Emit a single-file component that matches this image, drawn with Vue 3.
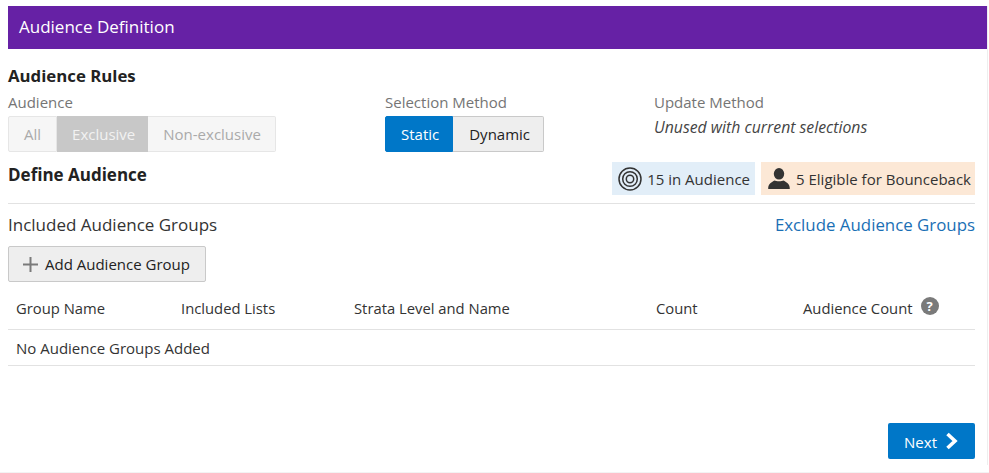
<template>
  <div class="page">
    <div class="panel">
      <div class="panel-title">Audience Definition</div>
      <div class="panel-body">
        <h2 class="rules-title">Audience Rules</h2>
        <div class="rules">
          <div class="rule rule-audience">
            <div class="field-label">Audience</div>
            <div class="btn-group disabled">
              <button
                v-for="opt in audienceOptions"
                :key="opt"
                class="seg"
                :class="{ selected: opt === 'Exclusive' }"
              >{{ opt }}</button>
            </div>
          </div>
          <div class="rule rule-selection">
            <div class="field-label">Selection Method</div>
            <div class="btn-group">
              <button class="seg active">Static</button>
              <button class="seg">Dynamic</button>
            </div>
          </div>
          <div class="rule">
            <div class="field-label">Update Method</div>
            <div class="unused">Unused with current selections</div>
          </div>
        </div>

        <div class="define-row">
          <h2 class="define-title">Define Audience</h2>
          <div class="badges">
            <div class="badge badge-blue">
              <svg width="24" height="24" viewBox="0 0 24 24" fill="none" stroke="#333" stroke-width="1.5">
                <circle cx="12" cy="12" r="11" />
                <circle cx="12" cy="12" r="7.3" />
                <circle cx="12" cy="12" r="3.7" />
              </svg>
              <span>15 in Audience</span>
            </div>
            <div class="badge badge-orange">
              <svg width="22" height="22" viewBox="0 0 22 22" fill="#333">
                <ellipse cx="11" cy="5.8" rx="5.2" ry="5.8" />
                <path d="M0.2 21 C0 15.5 4 14 6.5 12.5 C8 13.5 14 13.5 15.5 12.5 C18 14 22 15.5 21.8 21 Z" />
              </svg>
              <span>5 Eligible for Bounceback</span>
            </div>
          </div>
        </div>

        <div class="groups-row">
          <div class="groups-title">Included Audience Groups</div>
          <a class="exclude-link">Exclude Audience Groups</a>
        </div>

        <button class="add-btn">
          <svg width="15" height="15" viewBox="0 0 15 15" stroke="#7a7a7a" stroke-width="2">
            <path d="M7.5 0 V15 M0 7.5 H15" />
          </svg>
          Add Audience Group
        </button>

        <div class="table">
          <div class="row head">
            <div v-for="col in columns" :key="col.name" :class="col.cls">
              {{ col.name }}
              <span v-if="col.help" class="help">?</span>
            </div>
          </div>
          <div class="row empty">No Audience Groups Added</div>
        </div>

        <div class="footer">
          <button class="next-btn">
            <span class="next-label">Next</span>
            <svg width="14" height="18" viewBox="0 0 14 18" fill="none" stroke="#fff" stroke-width="3.6">
              <path d="M2.5 2 L10 9 L2.5 16" />
            </svg>
          </button>
        </div>
      </div>
    </div>
  </div>
</template>

<script setup>
const audienceOptions = ['All', 'Exclusive', 'Non-exclusive']

const columns = [
  { name: 'Group Name', cls: 'c1' },
  { name: 'Included Lists', cls: 'c2' },
  { name: 'Strata Level and Name', cls: 'c3' },
  { name: 'Count', cls: 'c4' },
  { name: 'Audience Count', cls: 'c5', help: true }
]
</script>

<style>
html,
body {
  margin: 0;
  background: #fff;
}
</style>

<style scoped>
.page {
  width: 989px;
  height: 473px;
  box-sizing: border-box;
  padding: 6px 1px 0 8px;
  border-bottom: 1px solid #f3f3f3;
  font-family: "Open Sans", "Noto Sans", sans-serif;
  font-size: 15px;
  color: #333;
  overflow: hidden;
}

.panel {
  min-height: 459px;
  box-sizing: border-box;
  border-right: 1px solid #eee;
}

.panel-title {
  height: 43px;
  line-height: 42px;
  padding-left: 11px;
  background: #6621a5;
  color: #fff;
  font-size: 17px;
}

.panel-body {
  padding: 16px 12px 0 0;
}

.rules-title,
.define-title {
  margin: 0;
  font-size: 17px;
  font-weight: 700;
  line-height: 22px;
  color: #222;
}

.rules-title {
  font-size: 16.8px;
}

.define-title {
  margin-top: 2px;
}

.rules {
  display: flex;
  margin-top: 5px;
}

.rule-audience {
  width: 377px;
}

.rule-selection {
  width: 269px;
}

.field-label {
  line-height: 20px;
  color: #757575;
}

.btn-group {
  display: inline-flex;
  margin-top: 4px;
  height: 36px;
}

.seg {
  padding: 0 13px 0 16px;
  border: 1px solid #c9c9c9;
  border-left-width: 0;
  background: #eee;
  font: inherit;
  color: #222;
}

.seg:first-child {
  border-left-width: 1px;
  border-radius: 2px 0 0 2px;
}

.seg:last-child {
  border-radius: 0 2px 2px 0;
}

.seg.active {
  padding: 0 13px 0 15px;
  border-color: #0077c8;
  background: #0077c8;
  color: #fff;
}

.disabled .seg {
  padding: 0 15px;
  border-color: #e6e6e6;
  background: #f6f6f6;
  color: #aaa;
}

.disabled .seg:last-child {
  padding-right: 14px;
}

.disabled .seg.selected {
  padding-right: 12px;
  border-color: #c8c8c8;
  background: #c8c8c8;
  color: #f2f2f2;
}

.unused {
  margin-top: 5px;
  line-height: 20px;
  font-size: 15.8px;
  font-style: italic;
  color: #444;
}

.define-row {
  display: flex;
  justify-content: space-between;
  align-items: flex-start;
  height: 41px;
  border-bottom: 1px solid #e2e2e2;
  padding-top: 11px;
  margin-top: -1px;
}

.badges {
  display: flex;
  gap: 6px;
}

.badge {
  display: flex;
  align-items: center;
  height: 33px;
}

.badge-blue {
  gap: 5px;
  padding: 0 5px 0 6px;
  background: #e2eef8;
}

.badge-orange {
  gap: 6px;
  padding: 0 4px 0 7px;
  background: #fce8d6;
}

.groups-row {
  display: flex;
  justify-content: space-between;
  align-items: center;
  margin-top: 9px;
  line-height: 24px;
  font-size: 17px;
}

.exclude-link {
  font-size: 16.85px;
  color: #1a6fb5;
}

.add-btn {
  display: flex;
  align-items: center;
  gap: 7px;
  height: 36px;
  margin-top: 9px;
  padding: 0 15px 0 14px;
  border: 1px solid #c9c9c9;
  border-radius: 2px;
  background: #eee;
  font: inherit;
  color: #222;
}

.row {
  display: flex;
  align-items: center;
  border-bottom: 1px solid #e2e2e2;
}

.head {
  height: 47px;
  margin-top: 1px;
  padding-top: 3px;
  box-sizing: border-box;
  font-size: 14.8px;
}

.empty {
  height: 35px;
  padding-left: 8px;
}

.c1 {
  width: 173px;
  padding-left: 8px;
  box-sizing: border-box;
}

.c2 {
  width: 173px;
}

.c3 {
  width: 302px;
}

.c4 {
  width: 147px;
}

.c5 {
  display: flex;
  gap: 8px;
}

.help {
  width: 18px;
  height: 18px;
  margin-top: -1px;
  border-radius: 50%;
  background: #7a7a7a;
  color: #fff;
  font-size: 13px;
  font-weight: 700;
  line-height: 18px;
  text-align: center;
}

.footer {
  display: flex;
  justify-content: flex-end;
  margin-top: 57px;
}

.next-btn {
  display: flex;
  align-items: center;
  gap: 8px;
  height: 36px;
  padding: 0 16px;
  border: 0;
  border-radius: 2px;
  background: #0077c8;
  color: #fff;
  font: inherit;
}

.next-label {
  padding-top: 2px;
}
</style>
